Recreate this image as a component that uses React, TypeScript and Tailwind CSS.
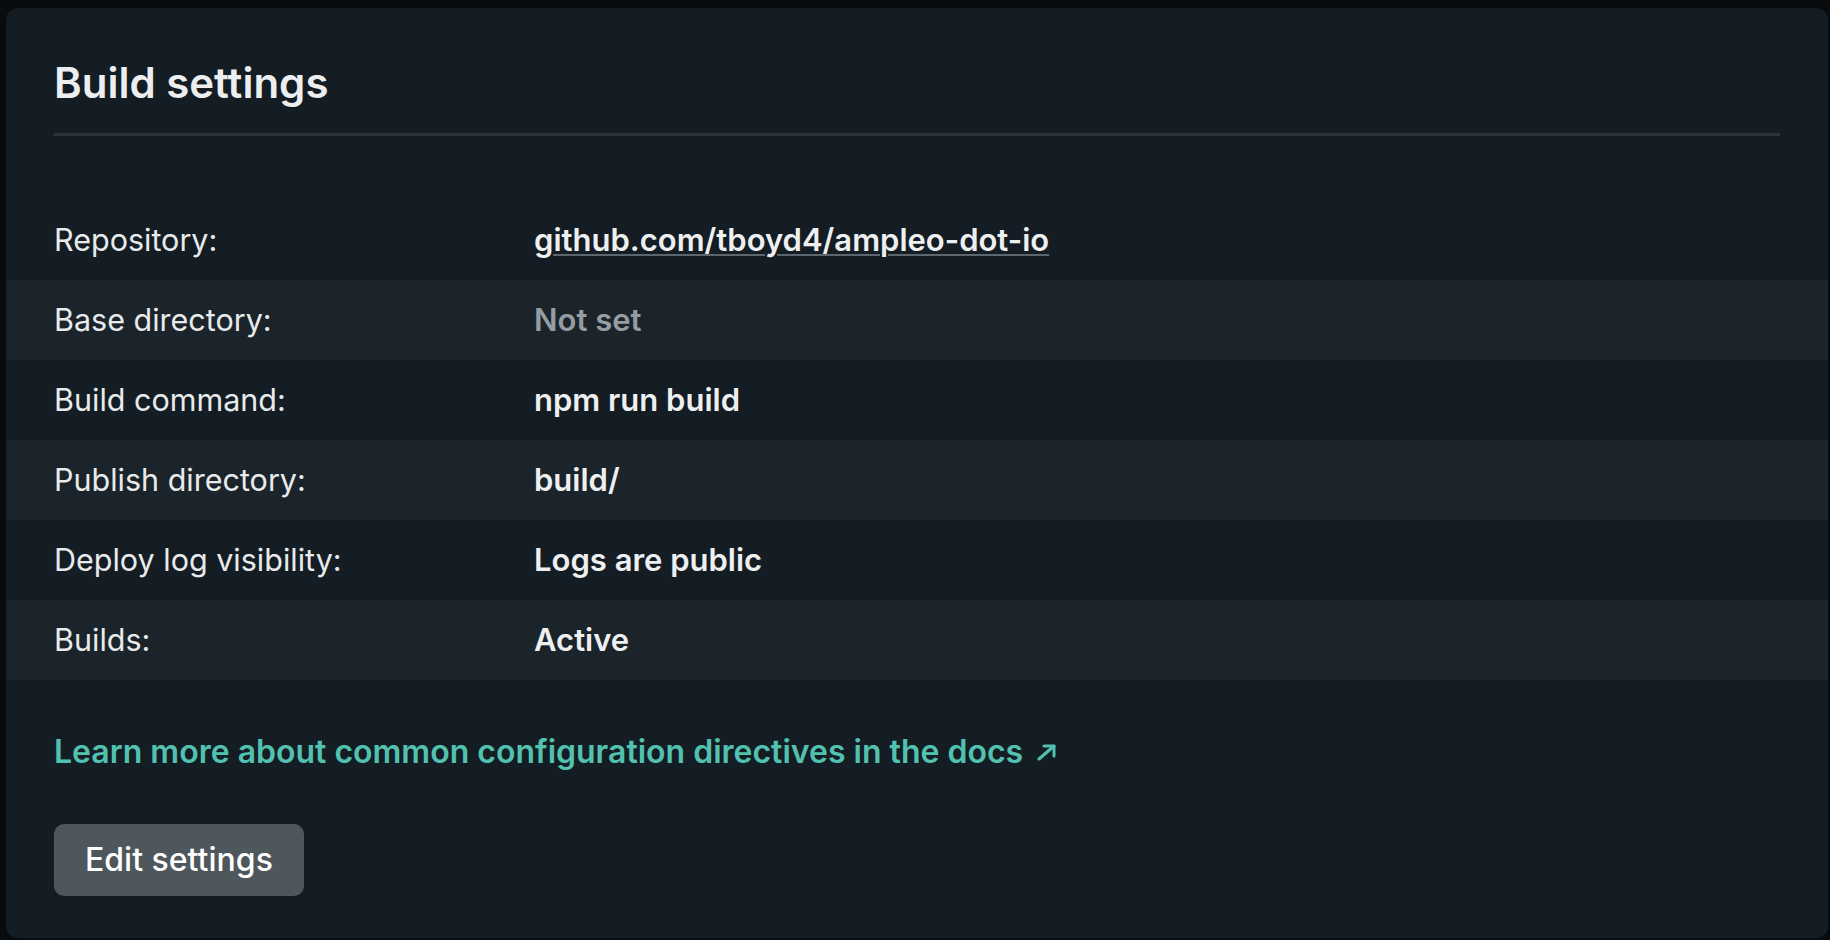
import React from 'react'

type RowT = {
  label: string
  value: string
  kind?: 'link' | 'muted' | 'plain'
}

const rows: RowT[] = [
  { label: 'Repository:', value: 'github.com/tboyd4/ampleo-dot-io', kind: 'link' },
  { label: 'Base directory:', value: 'Not set', kind: 'muted' },
  { label: 'Build command:', value: 'npm run build' },
  { label: 'Publish directory:', value: 'build/' },
  { label: 'Deploy log visibility:', value: 'Logs are public' },
  { label: 'Builds:', value: 'Active' },
]

function ArrowUpRight() {
  return (
    <svg
      width="22"
      height="18"
      viewBox="0 0 22 18"
      fill="none"
      stroke="currentColor"
      strokeWidth="3"
      strokeLinecap="round"
      strokeLinejoin="round"
      className="ml-[13px] inline-block"
    >
      <path d="M3 16 18 3" />
      <path d="M8 3h10v10" />
    </svg>
  )
}

function SettingRow({ row, striped }: { row: RowT; striped: boolean }) {
  return (
    <div className={`-mx-[48px] flex h-[80px] items-center px-[48px] ${striped ? 'bg-[#1b242a]' : ''}`}>
      <div className="w-[480px] shrink-0 text-[30.5px] text-[#e8eaeb]">{row.label}</div>
      {row.kind === 'link' ? (
        <a
          href="#"
          className="text-[31px] font-semibold text-[#eeeff0] underline decoration-[#5c666c] decoration-2 underline-offset-[3px]"
        >
          {row.value}
        </a>
      ) : (
        <div
          className={`text-[31px] font-semibold ${row.kind === 'muted' ? 'text-[#969ca0]' : 'text-[#eeeff0]'}`}
        >
          {row.value}
        </div>
      )}
    </div>
  )
}

export default function App() {
  return (
    <div className="h-[940px] overflow-hidden bg-[#080c0f] pt-[8px] pr-[2px] pl-[6px] font-['Inter',sans-serif]">
      <div className="h-[930px] rounded-[12px] bg-[#141d23] px-[48px] pt-[54px]">
        <h2 className="text-[42px] leading-[42px] font-semibold text-[#eceef0]">Build settings</h2>
        <div className="mt-[29px] h-[3px] bg-[#2b3439]" />

        {/* Alternate rows get the lighter band, edge to edge across the card. */}
        <div className="mt-[64px]">
          {rows.map((row, i) => (
            <SettingRow key={row.label} row={row} striped={i % 2 === 1} />
          ))}
        </div>

        <a
          href="#"
          className="mt-[52px] flex items-center text-[32px] leading-[40px] font-semibold text-[#52c1b0]"
        >
          Learn more about common configuration directives in the docs
          <ArrowUpRight />
        </a>

        <button className="mt-[52px] h-[72px] rounded-[10px] bg-[#4e575c] px-[31px] text-[32px] font-medium text-white">
          Edit settings
        </button>
      </div>
    </div>
  )
}
